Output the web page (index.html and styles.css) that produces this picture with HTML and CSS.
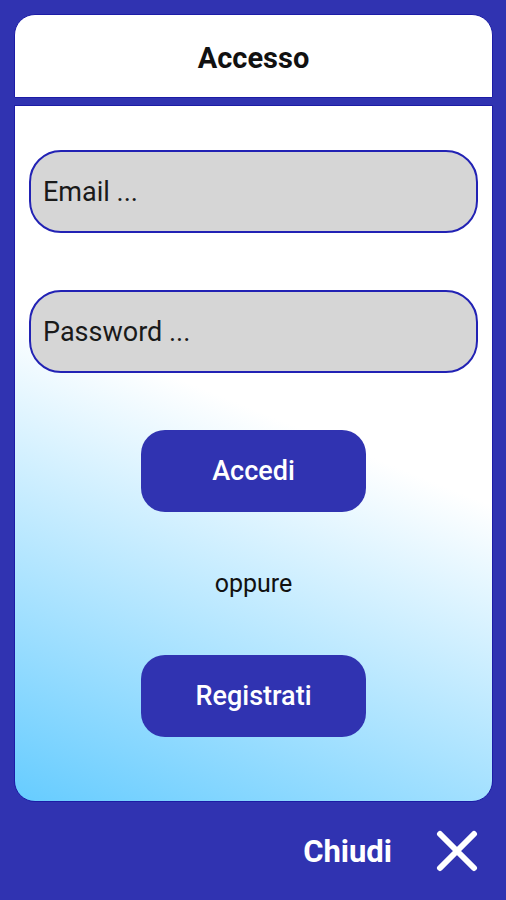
FILE: index.html
```html
<!DOCTYPE html>
<html lang="it">

<head>
    <meta charset="UTF-8">
    <meta name="viewport" content="width=device-width, initial-scale=1.0">
    <title>Accesso</title>
    <link rel="stylesheet" href="styles.css">
</head>

<body>
    <div class="screen">
        <div class="header">Accesso</div>
        <div class="panel">
            <input class="field" type="email" placeholder="Email ...">
            <input class="field" type="password" placeholder="Password ...">
            <button class="action">Accedi</button>
            <div class="or">oppure</div>
            <button class="action">Registrati</button>
        </div>
        <div class="footer">
            <span class="close-label">Chiudi</span>
            <svg class="close-icon" width="42" height="42" viewBox="0 0 42 42">
                <path d="M4 4 L38 38 M38 4 L4 38" stroke="#fff" stroke-width="6" stroke-linecap="round" fill="none" />
            </svg>
        </div>
    </div>
</body>

</html>
```

FILE: styles.css
```css
body {
    margin: 0;
    background: #3033b1;
    font-family: Roboto, 'Liberation Sans', sans-serif;
}

.screen {
    height: 900px;
    box-sizing: border-box;
    padding: 14px 13px 0 14px;
    display: flex;
    flex-direction: column;
}

.header {
    height: 84px;
    box-sizing: border-box;
    background: #fff;
    border: solid 1px #1c1ca6;
    border-radius: 21px 21px 0 0;
    display: flex;
    align-items: center;
    justify-content: center;
    padding-top: 4px;
    font-size: 29px;
    font-weight: bold;
    color: #111;
}

.panel {
    margin-top: 7px;
    height: 697px;
    box-sizing: border-box;
    border: solid 1px #1c1ca6;
    border-radius: 0 0 21px 21px;
    background: linear-gradient(22deg, #66ccff 0%, #ffffff 55%);
    padding: 44px 14px 0 14px;
    display: flex;
    flex-direction: column;
    align-items: center;
}

.field {
    width: 100%;
    height: 83px;
    box-sizing: border-box;
    margin-bottom: 57px;
    background: #d6d6d6;
    border: solid 2px #2222b4;
    border-radius: 32px;
    padding: 0 12px;
    font-family: inherit;
    font-size: 27px;
    color: #1a1a1a;
    outline: none;
}

.field::placeholder {
    color: #1a1a1a;
}

.action {
    width: 225px;
    height: 82px;
    border: none;
    border-radius: 24px;
    background: #3033b1;
    color: #fff;
    font-family: inherit;
    font-size: 27px;
    font-weight: 500;
}

.or {
    height: 143px;
    display: flex;
    align-items: center;
    justify-content: center;
    font-size: 25px;
    color: #111;
}

.footer {
    flex: 1;
    display: flex;
    align-items: center;
    justify-content: flex-end;
    gap: 44px;
    padding-right: 15px;
}

.close-label {
    color: #fff;
    font-size: 31px;
    font-weight: bold;
}
```
